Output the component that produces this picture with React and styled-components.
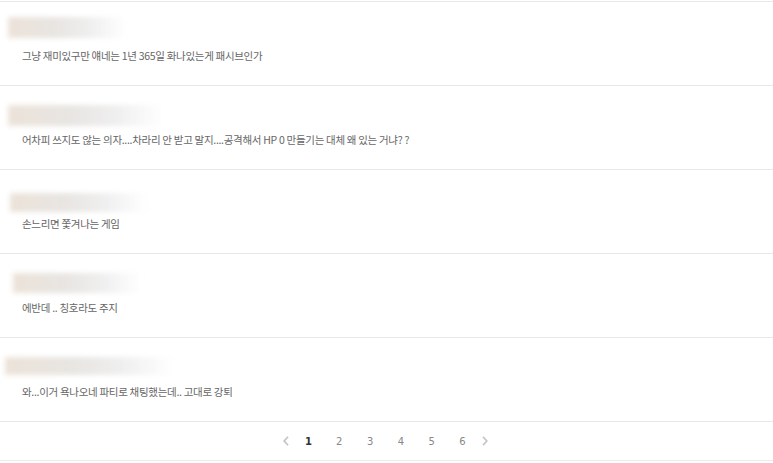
import styled, { createGlobalStyle } from "styled-components"

const GlobalStyle = createGlobalStyle`
    body {
        margin: 0;
        background: #fff;
        font-family: "Noto Sans CJK KR", "Noto Sans", sans-serif;
    }
`

const Wrapper = styled.div`
    width: 773px;
    padding-top: 1px;
`

const List = styled.ul`
    list-style: none;
    margin: 0;
    padding: 0;
    border-top: 1px solid #e9e9e9;
`

const Item = styled.li`
    box-sizing: border-box;
    height: 84px;
    padding-top: 15px;
    border-bottom: 1px solid #e9e9e9;
    display: flex;
    flex-direction: column;
`

const NickSlot = styled.div`
    height: 28px;
`

const Nick = styled.div`
    height: ${p => p.$h}px;
    width: ${p => p.$w}px;
    margin-top: ${p => p.$dy}px;
    margin-left: ${p => p.$x}px;
    background: linear-gradient(90deg, #ece3d9 0%, #e8e5e2 40%, #efefef 70%, rgba(255, 255, 255, 0) 100%);
    filter: blur(2.5px);
`

const Text = styled.p`
    margin: 2px 0 0 22px;
    font-size: 10.5px;
    letter-spacing: -0.3px;
    line-height: 18px;
    color: #666;
`

const Pager = styled.div`
    display: flex;
    justify-content: center;
    align-items: center;
    height: 38px;
    padding-right: 2px;
    border-bottom: 1px solid #ececec;
    font-family: "DejaVu Sans", Verdana, sans-serif;
    font-size: 10px;
`

const Page = styled.span`
    width: 30.8px;
    text-align: center;
    color: ${p => p.$active ? "#333" : "#888"};
    font-weight: ${p => p.$active ? "bold" : "normal"};
`

const Arrow = styled.span`
    width: 14px;
    display: flex;
    justify-content: center;
    align-items: center;
`

const Chevron = ({ dir }) => (
    <svg width="6" height="10" viewBox="0 0 6 10">
        <path
            d={dir === "left" ? "M5 0.8 L1.2 5 L5 9.2" : "M1 0.8 L4.8 5 L1 9.2"}
            fill="none"
            stroke="#c4c4c4"
            strokeWidth="1.7"
        />
    </svg>
)

const comments = [
    { dy: 0, h: 21, x: 8, w: 118, text: "그냥 재미있구만 얘네는 1년 365일 화나있는게 패시브인가" },
    { dy: 4, h: 21, x: 8, w: 155, text: "어차피 쓰지도 않는 의자....차라리 안 받고 말지....공격해서 HP 0 만들기는 대체 왜 있는 거냐? ?" },
    { dy: 8, h: 19, x: 10, w: 137, text: "손느리면 쫓겨나는 게임" },
    { dy: 4, h: 20, x: 13, w: 128, text: "에반데 .. 칭호라도 주지" },
    { dy: 4, h: 18, x: 5, w: 168, text: "와...이거 욕나오네 파티로 채팅했는데.. 고대로 강퇴" },
]

function App() {
    return (
        <Wrapper>
            <GlobalStyle />
            <List>
                {comments.map((c, i) => (
                    <Item key={i}>
                        <NickSlot>
                            <Nick $dy={c.dy} $h={c.h} $x={c.x} $w={c.w} />
                        </NickSlot>
                        <Text>{c.text}</Text>
                    </Item>
                ))}
            </List>
            <Pager>
                <Arrow><Chevron dir="left" /></Arrow>
                {[1, 2, 3, 4, 5, 6].map(n => (
                    <Page key={n} $active={n === 1}>{n}</Page>
                ))}
                <Arrow><Chevron dir="right" /></Arrow>
            </Pager>
        </Wrapper>
    )
}

export default App
